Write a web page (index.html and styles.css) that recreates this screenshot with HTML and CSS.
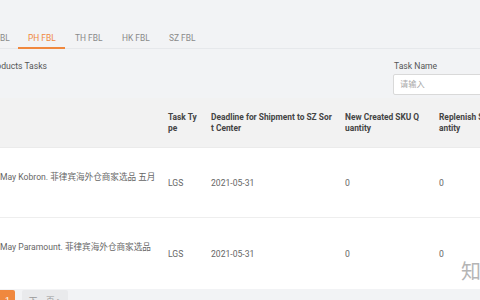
FILE: index.html
```html
<!DOCTYPE html>
<html>
<head>
<meta charset="utf-8">
<link rel="stylesheet" href="styles.css">
</head>
<body>
<div class="page">
  <div class="tabs">
    <div class="tab">MY FBL</div>
    <div class="tab active">PH FBL</div>
    <div class="tab">TH FBL</div>
    <div class="tab">HK FBL</div>
    <div class="tab">SZ FBL</div>
  </div>
  <div class="toolbar">
    <div class="title">Products Tasks</div>
    <div class="filter">
      <div class="label">Task Name</div>
      <div class="input">请输入</div>
    </div>
  </div>
  <div class="table">
    <div class="row head">
      <div class="cell c1"></div>
      <div class="cell c2">Task Type</div>
      <div class="cell c3">Deadline for Shipment to SZ Sort Center</div>
      <div class="cell c4">New Created SKU Quantity</div>
      <div class="cell c5">Replenish SKU Quantity</div>
    </div>
    <div class="row body r1">
      <div class="cell c1 name">May Kobron. 菲律宾海外仓商家选品 五月</div>
      <div class="cell c2">LGS</div>
      <div class="cell c3">2021-05-31</div>
      <div class="cell c4">0</div>
      <div class="cell c5">0</div>
    </div>
    <div class="row body r2">
      <div class="cell c1 name">May Paramount. 菲律宾海外仓商家选品</div>
      <div class="cell c2">LGS</div>
      <div class="cell c3">2021-05-31</div>
      <div class="cell c4">0</div>
      <div class="cell c5">0</div>
    </div>
  </div>
  <div class="pager">
    <div class="pg current">1</div>
    <div class="pg next">下一页 &gt;</div>
  </div>
</div>
<div class="watermark">知</div>
</body>
</html>
```
FILE: styles.css
```css
html, body {
  margin: 0;
  padding: 0;
  width: 480px;
  height: 300px;
  overflow: hidden;
  background: #f2f3f5;
  font-family: Roboto, "Noto Sans CJK SC", sans-serif;
}
.page {
  width: 560px;
}
.tabs {
  display: flex;
  margin-left: -29px;
  height: 48px;
  border-bottom: 1px solid #e6e8eb;
  align-items: flex-end;
}
.tab {
  width: 27px;
  padding: 0 10px 2px;
  height: 13px;
  white-space: nowrap;
  font-size: 8.4px;
  color: #8a8a8a;
  line-height: 12px;
  border-bottom: 2px solid transparent;
  margin-bottom: -1px;
}
.tab.active {
  color: #f0883e;
  border-bottom-color: #f0883e;
}
.toolbar {
  display: flex;
  justify-content: space-between;
  height: 49px;
}
.title {
  margin-left: -12px;
  margin-top: 11px;
  font-size: 8.6px;
  color: #555;
  line-height: 12px;
}
.filter {
  width: 167px;
  margin-top: 11px;
}
.label {
  font-size: 8.6px;
  color: #555;
  line-height: 11px;
  padding-left: 1px;
  margin-top: 1px;
}
.input {
  margin-top: 2px;
  height: 19px;
  border: 1px solid #d9d9d9;
  border-radius: 2px;
  background: #fff;
  font-size: 8.2px;
  color: #aaa;
  line-height: 19px;
  padding-left: 6px;
}
.table {
  display: flex;
  flex-direction: column;
}
.row {
  display: grid;
  grid-template-columns: 168px 43px 134px 94px 88px;
}
.cell {
  box-sizing: border-box;
  padding-right: 8px;
  word-break: break-all;
}
.head {
  height: 49px;
  background: #f2f2f2;
  align-items: center;
  font-size: 8.4px;
  font-weight: bold;
  color: #444;
  line-height: 11px;
  border-bottom: 1px solid #ebebeb;
}
.head .c2 { padding-right: 13px; }
.head .c3 { padding-right: 13px; }
.head .c4 { padding-right: 16px; }
.head .c5 { padding-right: 18px; }
.body {
  background: #fff;
  align-items: center;
  font-size: 8.6px;
  color: #666;
  line-height: 12px;
}
.r1 { height: 69px; border-bottom: 1px solid #eeeeee; }
.r2 { height: 71px; }
.name {
  padding-bottom: 12px;
  white-space: nowrap;
}
.r2 .name { padding-bottom: 14px; }
.pager {
  display: flex;
  gap: 7px;
  padding-top: 1px;
}
.pg {
  height: 22px;
  line-height: 22px;
  font-size: 8.6px;
  border-radius: 2px;
}
.current {
  width: 15px;
  background: #f0883e;
  color: #fff;
  text-align: center;
  border-radius: 0 2px 2px 0;
}
.next {
  width: 46px;
  background: #e9eaec;
  color: #999;
  text-align: center;
}
.watermark {
  position: absolute;
  left: 461px;
  top: 259px;
  font-size: 20px;
  color: #b5b5b5;
  font-family: "Noto Sans CJK SC", sans-serif;
  line-height: 24px;
}
```
